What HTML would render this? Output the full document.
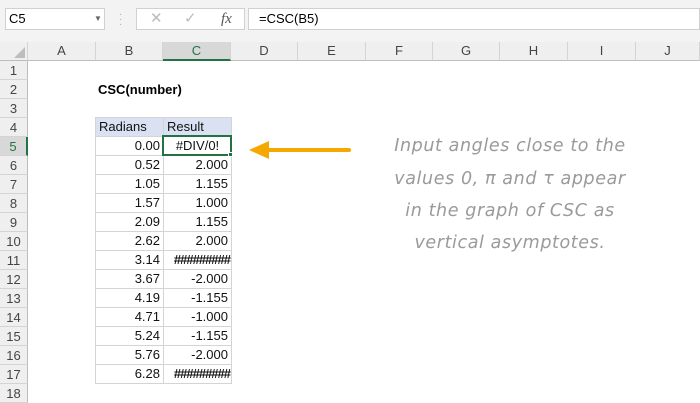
<!DOCTYPE html>
<html><head><style>
*{margin:0;padding:0;box-sizing:border-box}
body{width:700px;height:400px;overflow:hidden;background:#fff;font-family:"Liberation Sans",Arial,sans-serif;position:relative}
.a{position:absolute}
.ch{position:absolute;top:42px;height:19px;background:#efefef;border-right:1px solid #d4d4d4;border-bottom:1px solid #bdbdbd;font-size:13px;color:#444;text-align:center;line-height:18px}
.rh{position:absolute;left:0;width:28px;height:19px;background:#efefef;border-bottom:1px solid #d4d4d4;border-right:1px solid #bdbdbd;font-size:13px;color:#444;text-align:center;line-height:19px}
.c{position:absolute;height:20px;border:1px solid #d4d4d4;font-size:13px;line-height:18px;color:#111;padding:0 3px;text-align:right}
.note{position:absolute;left:350px;width:320px;text-align:center;font-family:"DejaVu Sans",sans-serif;font-style:oblique;font-size:17.5px;color:#9a9a9a;letter-spacing:0.6px}
</style></head><body>
<div class="a" style="left:0;top:0;width:700px;height:42px;background:#f3f3f3"></div>
<div class="a" style="left:5px;top:8px;width:100px;height:22px;background:#fff;border:1px solid #d0d0d0;font-size:13px;line-height:20px;padding-left:3px">C5<span class="a" style="left:88px;top:0;font-size:8px;color:#666">▼</span></div>
<div class="a" style="left:119px;top:12px;color:#aaa;font-size:10px;line-height:5px">·<br>·<br>·</div>
<div class="a" style="left:136px;top:8px;width:109px;height:22px;background:#fff;border:1px solid #d0d0d0;color:#bbb;font-size:15px;line-height:20px"><span class="a" style="left:13px">✕</span><span class="a" style="left:47px">✓</span><span class="a" style="left:84px;font-family:'Liberation Serif';font-style:italic;color:#555">fx</span></div>
<div class="a" style="left:248px;top:8px;width:452px;height:22px;background:#fff;border:1px solid #d0d0d0;font-size:13px;line-height:20px;padding-left:10px">=CSC(B5)</div>
<div class="ch" style="left:0;width:28px"></div>
<div class="a" style="left:14px;top:47px;width:0;height:0;border-left:11px solid transparent;border-bottom:11px solid #bdbdbd"></div>
<div class="ch" style="left:28px;width:68px">A</div>
<div class="ch" style="left:96px;width:67px">B</div>
<div class="ch" style="left:163px;width:68px;background:#d8d8d8;border-bottom:2px solid #217346;color:#217346">C</div>
<div class="ch" style="left:231px;width:67px">D</div>
<div class="ch" style="left:298px;width:68px">E</div>
<div class="ch" style="left:366px;width:67px">F</div>
<div class="ch" style="left:433px;width:67px">G</div>
<div class="ch" style="left:500px;width:68px">H</div>
<div class="ch" style="left:568px;width:68px">I</div>
<div class="ch" style="left:636px;width:64px">J</div>
<div class="rh" style="top:61px">1</div><div class="rh" style="top:80px">2</div><div class="rh" style="top:99px">3</div><div class="rh" style="top:118px">4</div>
<div class="rh" style="top:137px;background:#d8d8d8;color:#217346;border-right:2px solid #217346">5</div>
<div class="rh" style="top:156px">6</div><div class="rh" style="top:175px">7</div><div class="rh" style="top:194px">8</div><div class="rh" style="top:213px">9</div><div class="rh" style="top:232px">10</div><div class="rh" style="top:251px">11</div><div class="rh" style="top:270px">12</div><div class="rh" style="top:289px">13</div><div class="rh" style="top:308px">14</div><div class="rh" style="top:327px">15</div><div class="rh" style="top:346px">16</div><div class="rh" style="top:365px">17</div><div class="rh" style="top:384px">18</div>
<div class="a" style="left:98px;top:81px;font-size:13px;font-weight:bold;line-height:18px">CSC(number)</div>
<div class="c" style="left:95px;top:117px;width:69px;background:#d9e1f2;text-align:left">Radians</div>
<div class="c" style="left:163px;top:117px;width:69px;background:#d9e1f2;text-align:left">Result</div>
<div class="c" style="left:95px;top:136px;width:69px">0.00</div><div class="c" style="left:163px;top:136px;width:69px;text-align:center">#DIV/0!</div>
<div class="c" style="left:95px;top:155px;width:69px">0.52</div><div class="c" style="left:163px;top:155px;width:69px">2.000</div>
<div class="c" style="left:95px;top:174px;width:69px">1.05</div><div class="c" style="left:163px;top:174px;width:69px">1.155</div>
<div class="c" style="left:95px;top:193px;width:69px">1.57</div><div class="c" style="left:163px;top:193px;width:69px">1.000</div>
<div class="c" style="left:95px;top:212px;width:69px">2.09</div><div class="c" style="left:163px;top:212px;width:69px">1.155</div>
<div class="c" style="left:95px;top:231px;width:69px">2.62</div><div class="c" style="left:163px;top:231px;width:69px">2.000</div>
<div class="c" style="left:95px;top:250px;width:69px">3.14</div><div class="c" style="left:163px;top:250px;width:69px;letter-spacing:-1px;padding:0 1px;font-weight:bold">#########</div>
<div class="c" style="left:95px;top:269px;width:69px">3.67</div><div class="c" style="left:163px;top:269px;width:69px">-2.000</div>
<div class="c" style="left:95px;top:288px;width:69px">4.19</div><div class="c" style="left:163px;top:288px;width:69px">-1.155</div>
<div class="c" style="left:95px;top:307px;width:69px">4.71</div><div class="c" style="left:163px;top:307px;width:69px">-1.000</div>
<div class="c" style="left:95px;top:326px;width:69px">5.24</div><div class="c" style="left:163px;top:326px;width:69px">-1.155</div>
<div class="c" style="left:95px;top:345px;width:69px">5.76</div><div class="c" style="left:163px;top:345px;width:69px">-2.000</div>
<div class="c" style="left:95px;top:364px;width:69px">6.28</div><div class="c" style="left:163px;top:364px;width:69px;letter-spacing:-1px;padding:0 1px;font-weight:bold">#########</div>
<div class="a" style="left:162px;top:135px;width:70px;height:21px;border:2px solid #217346"></div>
<div class="a" style="left:228px;top:152px;width:5px;height:5px;background:#217346;border:1px solid #fff"></div>
<svg class="a" style="left:245px;top:138px" width="110" height="24"><path d="M104 12H20" stroke="#f4a800" stroke-width="4" stroke-linecap="round"/><path d="M4 12L24 3V21Z" fill="#f4a800"/></svg>
<div class="note" style="top:136px">Input angles close to the</div>
<div class="note" style="top:169px">values 0, π and τ appear</div>
<div class="note" style="top:201px">in the graph of CSC as</div>
<div class="note" style="top:233px">vertical asymptotes.</div>
</body></html>
